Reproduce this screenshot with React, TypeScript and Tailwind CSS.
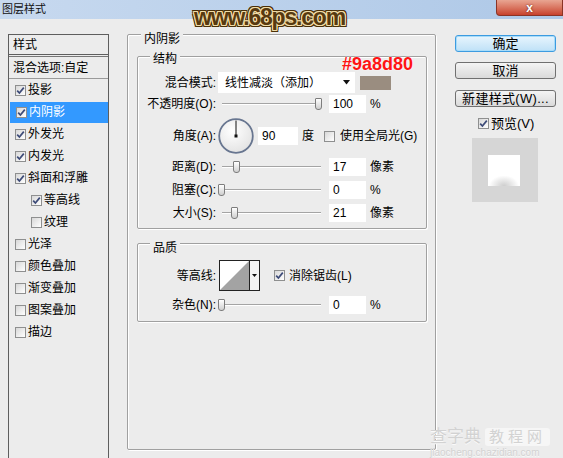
import React from 'react';

const Check = ({ on }: { on?: boolean }) => (
  <span className="flex h-[11px] w-[11px] shrink-0 items-center justify-center border border-[#8e8f8f] bg-linear-to-br from-[#d8d8d8] to-white">
    {on && (
      <svg width="9" height="9" viewBox="0 0 9 9">
        <path d="M1.2 4.6 L3.4 7 L7.8 1.6" fill="none" stroke="#3d4b78" strokeWidth="1.7" />
      </svg>
    )}
  </span>
);

const Slider = ({ pos }: { pos: number }) => (
  <div className="relative h-[18px] w-[106px] shrink-0">
    <div className="absolute left-[4px] right-[3px] top-[8px] h-[2px] border-t border-b border-t-[#a4a4a4] border-b-white" />
    <div
      className="absolute top-[3px] h-[12px] w-[7px] rounded-b-[3px] rounded-t-[1px] border border-[#7d7d7d] bg-linear-to-b from-white to-[#cfcfcf]"
      style={{ left: pos }}
    />
  </div>
);

const Field = ({ v, w = 'w-[37px]' }: { v: string; w?: string }) => (
  <div className={`h-[18px] ${w} shrink-0 bg-white pl-[4px] leading-[18px]`}>{v}</div>
);

const Label = ({ children }: { children: React.ReactNode }) => (
  <div className="w-[78px] shrink-0 text-right leading-[14px]">{children}</div>
);

const Group = ({
  title,
  cls,
  legend,
  children,
}: {
  title: string;
  cls: string;
  legend: string;
  children: React.ReactNode;
}) => (
  <div className={`relative rounded-[2px] border border-[#a0a0a0] shadow-[1px_1px_0_#fff,inset_1px_1px_0_#fff] ${cls}`}>
    <span className={`absolute bg-[#ececec] px-[3px] leading-[14px] ${legend}`}>{title}</span>
    {children}
  </div>
);

const list: { name: string; on?: boolean; indent?: boolean; sel?: boolean }[] = [
  { name: '投影', on: true },
  { name: '内阴影', on: true, sel: true },
  { name: '外发光', on: true },
  { name: '内发光', on: true },
  { name: '斜面和浮雕', on: true },
  { name: '等高线', on: true, indent: true },
  { name: '纹理', indent: true },
  { name: '光泽' },
  { name: '颜色叠加' },
  { name: '渐变叠加' },
  { name: '图案叠加' },
  { name: '描边' },
];

const Button = ({ children, main }: { children: React.ReactNode; main?: boolean }) => (
  <div
    className={`flex h-[17px] items-center justify-center rounded-[3px] border text-[13px] leading-[15px] ${
      main
        ? 'border-[#3c9be0] bg-linear-to-b from-[#e8f5fd] to-[#bfe1f7] shadow-[inset_0_0_0_1px_#a8dcf9]'
        : 'border-[#707070] bg-linear-to-b from-[#f4f4f4] to-[#dadada]'
    }`}
  >
    {children}
  </div>
);

export default function App() {
  return (
    <div className="relative h-[458px] w-[563px] overflow-hidden bg-[#ececec] text-[12px] text-black [font-family:'Liberation_Sans','Noto_Sans_CJK_SC',sans-serif]">
      {/* title bar */}
      <div className="flex h-[19px] items-start justify-between bg-linear-to-r from-[#c7d9ef] to-[#aec8e7]">
        <span className="pl-[2px] text-[11px] leading-[19px] text-[#111]">图层样式</span>
        <div className="flex h-[16px] w-[67px] items-center justify-center rounded-bl-[4px] border border-t-0 border-[#8a3426] bg-linear-to-b from-[#e8a592] to-[#c7402c] text-[12px] font-bold leading-none text-white [text-shadow:0_0_2px_#5a1a10]">
          x
        </div>
      </div>

      <div className="flex items-start">
        {/* style list */}
        <div className="ml-[8px] mt-[15px] flex h-[440px] w-[101px] shrink-0 flex-col border border-[#5e5e5e] bg-[#ececec]">
          <div className="flex h-[20px] items-center border-b border-[#5e5e5e] pl-[4px]">样式</div>
          <div className="h-[2px] border-b border-[#777]" />
          <div className="flex h-[22px] items-center border-b border-[#9a9a9a] pl-[4px]">混合选项:自定</div>
          {list.map((it) => (
            <div key={it.name} className="flex h-[22px] items-center">
              <div
                className={`flex h-[21px] w-full items-center gap-[2px] ${it.indent ? 'pl-[22px]' : 'pl-[6px]'} ${
                  it.sel ? 'ml-[1px] bg-[#3399ff] text-white' : ''
                }`}
              >
                <Check on={it.on} />
                <span className="leading-[14px]">{it.name}</span>
              </div>
            </div>
          ))}
        </div>

        {/* main group */}
        <Group title="内阴影" cls="ml-[18px] mt-[15px] h-[416px] w-[309px] shrink-0 pl-[9px] pt-[21px]" legend="left-[13px] -top-[3px]">
          <Group title="结构" cls="h-[173px] w-[290px] pt-[15px]" legend="left-[12px] -top-[5px]">
            <div className="flex h-[21px] items-center">
              <Label>混合模式:</Label>
              <div className="ml-[2px] flex h-[21px] w-[137px] items-center justify-between bg-white pl-[7px] pr-[4px]">
                <span>线性减淡（添加）</span>
                <svg width="8" height="5" viewBox="0 0 8 5">
                  <path d="M0 0 H7 L3.5 4.5 Z" fill="#111" />
                </svg>
              </div>
              <div className="ml-[5px] h-[14px] w-[31px] bg-[#9a8d80]" />
            </div>
            <div className="mt-[2px] flex h-[18px] items-center">
              <Label>不透明度(O):</Label>
              <div className="ml-[2px]">
                <Slider pos={97} />
              </div>
              <div className="ml-[5px]">
                <Field v="100" />
              </div>
              <span className="ml-[4px]">%</span>
            </div>
            <div className="mt-[5px] flex h-[36px] items-center">
              <Label>角度(A):</Label>
              <svg className="ml-[2px] shrink-0" width="36" height="36" viewBox="0 0 36 36">
                <defs>
                  <radialGradient id="dial" cx="0.4" cy="0.35" r="0.7">
                    <stop offset="0" stopColor="#ffffff" />
                    <stop offset="1" stopColor="#e2e2e2" />
                  </radialGradient>
                </defs>
                <circle cx="18" cy="18" r="16.8" fill="url(#dial)" stroke="#687690" strokeWidth="1.8" />
                <line x1="18" y1="2.5" x2="18" y2="18" stroke="#111" strokeWidth="1" />
                <rect x="16.5" y="16.5" width="3" height="3" fill="#111" />
              </svg>
              <div className="ml-[4px]">
                <Field v="90" w="w-[40px]" />
              </div>
              <span className="ml-[4px]">度</span>
              <div className="ml-[10px]">
                <Check />
              </div>
              <span className="ml-[5px]">使用全局光(G)</span>
            </div>
            {[
              { l: '距离(D):', p: 15, v: '17', u: '像素', mt: 'mt-[4px]' },
              { l: '阻塞(C):', p: 0, v: '0', u: '%', mt: 'mt-[5px]' },
              { l: '大小(S):', p: 13, v: '21', u: '像素', mt: 'mt-[5px]' },
            ].map((r) => (
              <div key={r.l} className={`${r.mt} flex h-[18px] items-center`}>
                <Label>{r.l}</Label>
                <div className="ml-[2px]">
                  <Slider pos={r.p} />
                </div>
                <div className="ml-[5px]">
                  <Field v={r.v} />
                </div>
                <span className="ml-[4px]">{r.u}</span>
              </div>
            ))}
          </Group>

          <Group title="品质" cls="mt-[14px] h-[79px] w-[290px] pt-[16px]" legend="left-[12px] -top-[3px]">
            <div className="flex h-[31px] items-center">
              <Label>等高线:</Label>
              <div className="ml-[3px] flex h-[31px] w-[41px] shrink-0 border border-[#222] bg-white">
                <svg width="29" height="29" viewBox="0 0 29 29">
                  <path d="M0 29 L29 0 L29 29 Z" fill="#a3a3a3" />
                </svg>
                <div className="flex flex-1 items-center justify-center border-l border-[#222] bg-[#f4f4f4]">
                  <svg width="5" height="3" viewBox="0 0 5 3">
                    <path d="M0 0 H5 L2.5 3 Z" fill="#111" />
                  </svg>
                </div>
              </div>
              <div className="ml-[14px]">
                <Check on />
              </div>
              <span className="ml-[4px]">消除锯齿(L)</span>
            </div>
            <div className="mt-[5px] flex h-[18px] items-center">
              <Label>杂色(N):</Label>
              <div className="ml-[2px]">
                <Slider pos={0} />
              </div>
              <div className="ml-[5px]">
                <Field v="0" />
              </div>
              <span className="ml-[4px]">%</span>
            </div>
          </Group>
        </Group>

        {/* buttons */}
        <div className="ml-[19px] mt-[16px] flex w-[101px] shrink-0 flex-col">
          <Button main>确定</Button>
          <div className="mt-[10px]">
            <Button>取消</Button>
          </div>
          <div className="mt-[11px]">
            <Button>
              <span className="tracking-[0.3px]">新建样式(W)...</span>
            </Button>
          </div>
          <div className="mt-[10px] flex h-[13px] items-center pl-[23px]">
            <Check on />
            <span className="ml-[2px] text-[13px] leading-[14px]">预览(V)</span>
          </div>
          <div className="ml-[17px] mt-[8px] h-[64px] w-[66px] bg-[#d6d6d6] pl-[16px] pt-[17px]">
            <div className="h-[31px] w-[32px] bg-[radial-gradient(ellipse_55%_40%_at_50%_100%,#cdcdcd,#ffffff_85%)]" />
          </div>
        </div>
      </div>

      {/* overlays: site watermark and colour note */}
      <div className="absolute left-[194px] top-[3px] text-[23px] font-bold leading-[28px] tracking-[-1.2px] text-[#573a10] [text-shadow:1px_0_0_#f2dca6,-1px_0_0_#f2dca6,0_1px_0_#f2dca6,0_-1px_0_#f2dca6,1px_1px_0_#f2dca6,-1px_-1px_0_#f2dca6,1px_-1px_0_#f2dca6,-1px_1px_0_#f2dca6,2px_0_0_#4a3008,-2px_0_0_#4a3008,0_2px_0_#4a3008,0_-2px_0_#4a3008,2px_2px_0_#4a3008,-2px_-2px_0_#4a3008,2px_-2px_0_#4a3008,-2px_2px_0_#4a3008]">
        www.68ps.com
      </div>
      <div className="absolute left-[342px] top-[54px] text-[18px] font-bold leading-[20px] text-[#ff1414] [text-shadow:0_0_2px_#fff]">
        #9a8d80
      </div>
      <div className="absolute left-[430px] top-[427px] flex flex-col items-start text-[#d2d2d2] [text-shadow:0_1px_0_#fafafa]">
        <div className="flex items-center gap-[4px]">
          <span className="text-[17px] leading-[20px]">查字典</span>
          <span className="rounded-[3px] bg-[#f6f6f6] px-[4px] text-[15px] leading-[18px] tracking-[4px]">教程网</span>
        </div>
        <span className="text-[10px] leading-[11px]">jiaocheng.chazidian.com</span>
      </div>
    </div>
  );
}
